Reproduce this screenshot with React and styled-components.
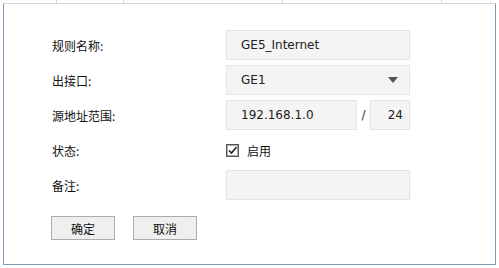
import React from 'react'
import styled, { createGlobalStyle } from 'styled-components'

const GlobalStyle = createGlobalStyle`
  body {
    margin: 0;
    background: #ffffff;
    font-family: "Noto Sans CJK SC", "DejaVu Sans", sans-serif;
  }
`

const Page = styled.div`
  width: 499px;
  height: 268px;
  padding-left: 3px;
  box-sizing: border-box;
`

const HeaderStrip = styled.div`
  display: grid;
  grid-template-columns: 54px 67px 159px 159px 1fr;
  height: 3px;
  width: 493px;
`

const HeaderCell = styled.div`
  border-right: ${(p) => (p.$last ? 'none' : '1px solid #d6d6d6')};
`

const Panel = styled.div`
  width: 493px;
  height: 262px;
  box-sizing: border-box;
  border-top: 1px solid #d6d6d6;
  border-left: 1px solid #7f9bb5;
  border-right: 1px solid #7f9bb5;
  border-bottom: 1px solid #7f9bb5;
  padding: 26px 0 0 48px;
`

const Form = styled.div`
  display: grid;
  grid-template-columns: 174px 184px;
  grid-auto-rows: 30px;
  row-gap: 5px;
  align-items: center;
`

const Label = styled.div`
  font-size: 12px;
  color: #111;
  font-family: "Noto Sans CJK SC", sans-serif;
`

const Field = styled.div`
  display: flex;
  align-items: center;
  height: 30px;
`

const TextBox = styled.div`
  box-sizing: border-box;
  height: 30px;
  width: ${(p) => p.$width || '184px'};
  background: #f4f4f4;
  border: 1px solid #e4e4e4;
  padding: 0 ${(p) => p.$padRight || '0'} 0 ${(p) => p.$padLeft || '14px'};
  display: flex;
  align-items: center;
  justify-content: ${(p) => (p.$right ? 'flex-end' : 'space-between')};
  font-family: "DejaVu Sans", Verdana, sans-serif;
  font-size: 12px;
  color: #222;
`

const Arrow = styled.span`
  width: 0;
  height: 0;
  margin-right: 11px;
  border-left: 5px solid transparent;
  border-right: 5px solid transparent;
  border-top: 6px solid #555;
`

const Slash = styled.span`
  width: 13px;
  text-align: center;
  font-family: "DejaVu Sans", sans-serif;
  font-size: 12px;
  color: #333;
`

const CheckRow = styled.label`
  display: flex;
  align-items: center;
  gap: 8px;
  font-size: 12px;
  color: #111;
`

const Buttons = styled.div`
  display: flex;
  gap: 18px;
  margin: 16px 0 0 -1px;
`

const Button = styled.button`
  width: 64px;
  height: 24px;
  box-sizing: border-box;
  border: 1px solid #acacac;
  background: #efefef;
  font-family: "Noto Sans CJK SC", sans-serif;
  font-size: 12px;
  color: #111;
  padding: 0;
`

function CheckIcon() {
  return (
    <svg width="13" height="13" viewBox="0 0 13 13">
      <rect x="0.5" y="0.5" width="12" height="12" fill="#fff" stroke="#555" />
      <rect x="1.5" y="1.5" width="10" height="10" fill="none" stroke="#aaa" />
      <path d="M3 6.5 L5.5 9 L10.5 3" fill="none" stroke="#222" strokeWidth="1.6" />
    </svg>
  )
}

export default function App() {
  return (
    <Page>
      <GlobalStyle />
      <HeaderStrip>
        <HeaderCell />
        <HeaderCell />
        <HeaderCell />
        <HeaderCell />
        <HeaderCell $last />
      </HeaderStrip>
      <Panel>
        <Form>
          <Label>规则名称:</Label>
          <Field>
            <TextBox>GE5_Internet</TextBox>
          </Field>

          <Label>出接口:</Label>
          <Field>
            <TextBox>
              GE1
              <Arrow />
            </TextBox>
          </Field>

          <Label>源地址范围:</Label>
          <Field>
            <TextBox $width="131px">192.168.1.0</TextBox>
            <Slash>/</Slash>
            <TextBox $width="40px" $right $padRight="6px">
              24
            </TextBox>
          </Field>

          <Label>状态:</Label>
          <Field>
            <CheckRow>
              <CheckIcon />
              启用
            </CheckRow>
          </Field>

          <Label>备注:</Label>
          <Field>
            <TextBox />
          </Field>
        </Form>
        <Buttons>
          <Button>确定</Button>
          <Button>取消</Button>
        </Buttons>
      </Panel>
    </Page>
  )
}
